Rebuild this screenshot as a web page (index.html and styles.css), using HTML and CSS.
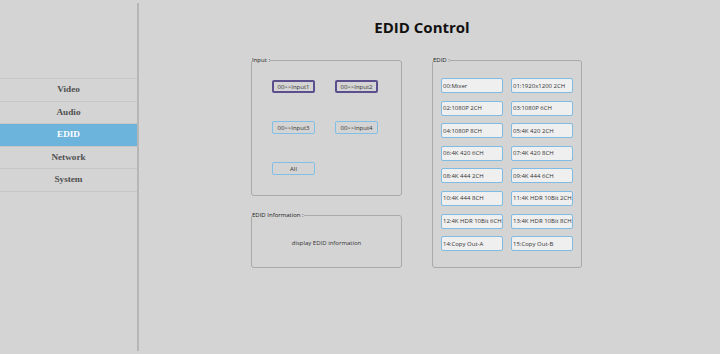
FILE: index.html
```html
<!DOCTYPE html>
<html lang="en">
<head>
    <meta charset="UTF-8">
    <meta name="viewport" content="width=device-width, initial-scale=1.0">
    <title>EDID Control</title>
    <link rel="stylesheet" href="styles.css">
</head>
<body>

<!-- Left menu -->
<div class="sidebar">
    <ul class="menu">
        <li>Video</li>
        <li>Audio</li>
        <li class="active">EDID</li>
        <li>Network</li>
        <li>System</li>
    </ul>
</div>

<!-- Main area -->
<div class="main">
    <h1>EDID Control</h1>

    <div class="panels">
        <div class="left-col">
            <fieldset class="box input-box">
                <legend>Input :</legend>
                <div class="input-grid">
                    <div class="in-btn selected">00&gt;&gt;Input1</div>
                    <div class="in-btn selected">00&gt;&gt;Input2</div>
                    <div class="in-btn">00&gt;&gt;Input3</div>
                    <div class="in-btn">00&gt;&gt;Input4</div>
                    <div class="in-btn">All</div>
                </div>
            </fieldset>

            <fieldset class="box info-box">
                <legend>EDID Information :</legend>
                <div class="info-text">display EDID information</div>
            </fieldset>
        </div>

        <fieldset class="box edid-box">
            <legend>EDID :</legend>
            <div class="edid-grid">
                <div class="edid-btn">00:Mixer</div>
                <div class="edid-btn">01:1920x1200 2CH</div>
                <div class="edid-btn">02:1080P 2CH</div>
                <div class="edid-btn">03:1080P 6CH</div>
                <div class="edid-btn">04:1080P 8CH</div>
                <div class="edid-btn">05:4K 420 2CH</div>
                <div class="edid-btn">06:4K 420 6CH</div>
                <div class="edid-btn">07:4K 420 8CH</div>
                <div class="edid-btn">08:4K 444 2CH</div>
                <div class="edid-btn">09:4K 444 6CH</div>
                <div class="edid-btn">10:4K 444 8CH</div>
                <div class="edid-btn">11:4K HDR 10Bit 2CH</div>
                <div class="edid-btn">12:4K HDR 10Bit 6CH</div>
                <div class="edid-btn">13:4K HDR 10Bit 8CH</div>
                <div class="edid-btn">14:Copy Out-A</div>
                <div class="edid-btn">15:Copy Out-B</div>
            </div>
        </fieldset>
    </div>
</div>

</body>
</html>
```

FILE: styles.css
```css
* {
    box-sizing: border-box;
}

body {
    margin: 0;
    height: 354px;
    overflow: hidden;
    display: flex;
    background: #d4d4d4;
    font-family: 'Open Sans', sans-serif;
    color: #333;
}

/* Sidebar */
.sidebar {
    width: 139px;
    height: 348px;
    margin-top: 3px;
    padding-top: 75px;
    border-right: 2px solid #b6b6b6;
}

.menu {
    list-style: none;
    margin: 0;
    padding: 0;
    border-top: 1px solid #c6c6c6;
}

.menu li {
    height: 22.6px;
    line-height: 21.6px;
    border-bottom: 1px solid #c6c6c6;
    text-align: center;
    font-family: 'Liberation Serif', serif;
    font-weight: bold;
    font-size: 9.2px;
    color: #505050;
}

.menu li.active {
    background: #6cb4dc;
    color: #fff;
}

/* Main */
.main {
    flex: 1;
}

h1 {
    margin: 0;
    padding: 16px 15px 0 0;
    line-height: 22px;
    font-size: 15px;
    font-weight: bold;
    text-align: center;
    color: #111;
}

.panels {
    display: flex;
    gap: 30px;
    margin-top: 18px;
    padding-left: 112px;
}

.left-col {
    display: flex;
    flex-direction: column;
    gap: 15px;
}

/* Group boxes */
.box {
    margin: 0;
    width: 151px;
    border: 1px solid #a9a9a9;
    border-radius: 3px;
    padding: 0;
}

.box legend {
    padding: 0;
    font-size: 6px;
    line-height: 8px;
    color: #222;
}

.input-grid {
    display: grid;
    grid-template-columns: 43px 43px;
    column-gap: 20px;
    row-gap: 28px;
    margin: 16px 0 20px 20px;
}

.in-btn,
.edid-btn {
    font-size: 6px;
    color: #333;
    cursor: pointer;
    border-radius: 2px;
}

.in-btn {
    height: 13px;
    display: flex;
    align-items: center;
    justify-content: center;
    border: 1px solid #82bfe6;
}

.in-btn.selected {
    border: 2px solid #5b4f8e;
}

.info-box {
    height: 57px;
}

.info-text {
    height: 47px;
    display: flex;
    align-items: center;
    justify-content: center;
    font-size: 6px;
}

.edid-box {
    width: 150px;
}

.edid-grid {
    display: grid;
    grid-template-columns: 62px 62px;
    column-gap: 8px;
    row-gap: 7.6px;
    margin: 14px 0 16px 8px;
}

.edid-btn {
    height: 15px;
    display: flex;
    align-items: center;
    padding-left: 1px;
    white-space: nowrap;
    background: #efefef;
    border: 1px solid #7fbbe2;
}
```
